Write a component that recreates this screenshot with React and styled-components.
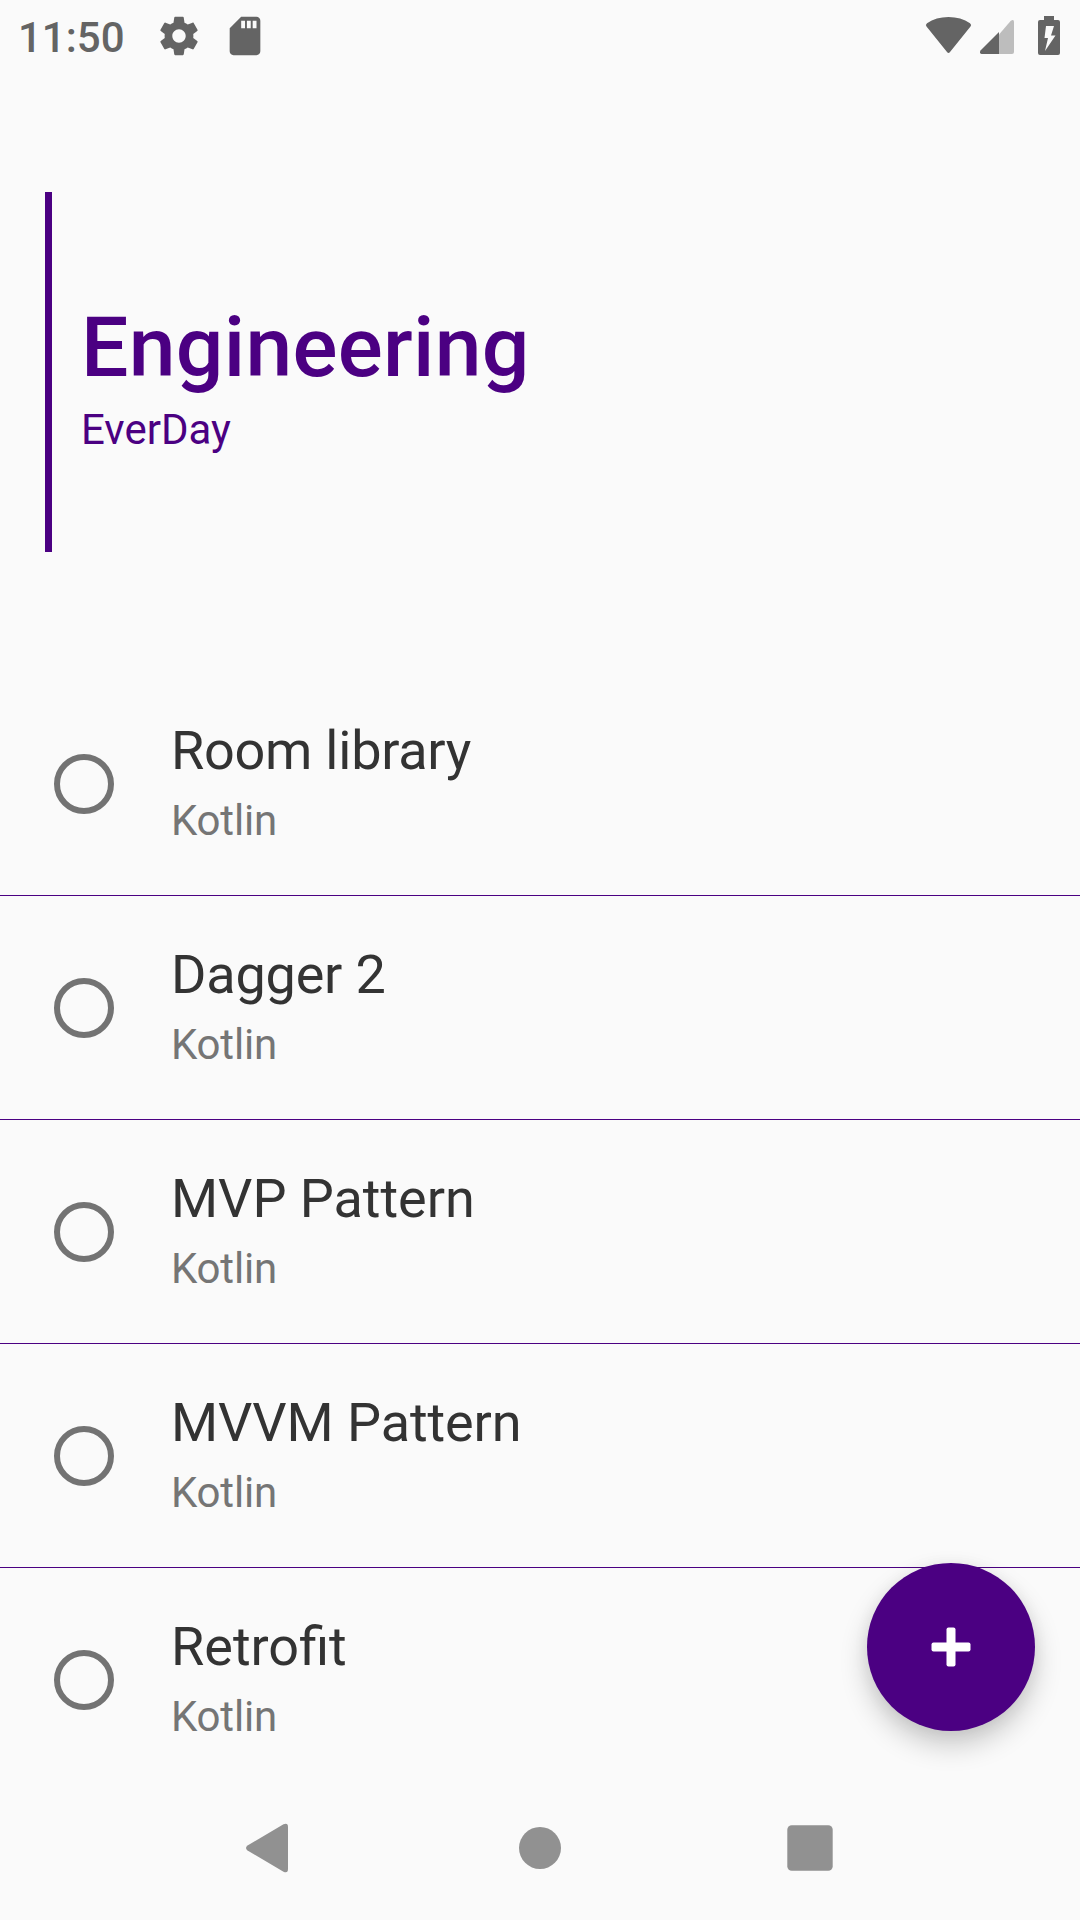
import React from "react";
import styled, { createGlobalStyle } from "styled-components";

const PURPLE = "#4b0082";
const STATUS = "#646464";

const GlobalStyle = createGlobalStyle`
  * { box-sizing: border-box; }
  body {
    margin: 0;
    background: #fafafa;
    font-family: Roboto, "Noto Sans", sans-serif;
    overflow: hidden;
  }
  h1, h2, p, ul { margin: 0; padding: 0; font-weight: 400; }
`;

const Screen = styled.div`
  position: relative;
  display: flex;
  flex-direction: column;
  width: 1080px;
  height: 1920px;
  background: #fafafa;
  overflow: hidden;
`;

const StatusBar = styled.header`
  display: flex;
  align-items: center;
  justify-content: space-between;
  flex: none;
  height: 72px;
  padding: 0 20px 0 18px;
`;

const StatusGroup = styled.div`
  display: flex;
  align-items: center;
  gap: ${(p) => p.$gap}px;
`;

const Clock = styled.span`
  width: 118px;
  padding-top: 3px;
  font-size: 42px;
  line-height: 50px;
  font-weight: 500;
  color: ${STATUS};
`;

const Icon = styled.svg`
  display: block;
  flex: none;
`;

const Header = styled.section`
  display: flex;
  flex: none;
  height: 600px;
  padding: 120px 45px;
`;

const Accent = styled.div`
  width: 7px;
  background: ${PURPLE};
`;

const Heading = styled.div`
  display: flex;
  flex-direction: column;
  gap: 8px;
  padding: 107px 0 0 29px;
  color: ${PURPLE};
`;

const Title = styled.h1`
  font-size: 84px;
  line-height: 98px;
  font-weight: 500;
  letter-spacing: 0.3px;
`;

const Subtitle = styled.p`
  font-size: 42px;
  line-height: 50px;
`;

const List = styled.ul`
  flex: 1;
  min-height: 0;
  overflow: hidden;
  list-style: none;
`;

const Row = styled.li`
  display: flex;
  align-items: center;
  height: 224px;
  padding-left: 54px;
  border-bottom: 1px solid ${PURPLE};
`;

const Radio = styled.span`
  width: 60px;
  height: 60px;
  margin-top: 1px;
  border: 6px solid #737373;
  border-radius: 50%;
`;

const RowText = styled.div`
  display: flex;
  flex-direction: column;
  gap: 13px;
  padding: 0 0 3px 57px;
`;

const RowTitle = styled.h2`
  font-size: 54px;
  line-height: 64px;
  letter-spacing: ${(p) => p.$tracking};
  color: #333333;
`;

const RowMeta = styled.p`
  font-size: 42px;
  line-height: 50px;
  letter-spacing: -0.2px;
  color: #757575;
`;

const Fab = styled.button`
  position: absolute;
  right: 45px;
  bottom: 189px;
  display: grid;
  place-items: center;
  width: 168px;
  height: 168px;
  padding: 0;
  border: 0;
  border-radius: 50%;
  background: ${PURPLE};
  box-shadow: 0 14px 28px rgba(0, 0, 0, 0.2), 0 2px 16px rgba(0, 0, 0, 0.06);
`;

const NavBar = styled.nav`
  display: flex;
  align-items: center;
  justify-content: center;
  gap: 126px;
  flex: none;
  height: 144px;
`;

const NavKey = styled.span`
  display: grid;
  place-items: center;
  width: 144px;
  height: 144px;
`;

const tasks = [
  { name: "Room library", tracking: "-0.25px" },
  { name: "Dagger 2", tracking: "-0.2px" },
  { name: "MVP Pattern", tracking: "-0.05px" },
  { name: "MVVM Pattern", tracking: "-0.1px" },
  { name: "Retrofit", tracking: "normal" },
];

export default function App() {
  return (
    <>
      <GlobalStyle />
      <Screen>
        <StatusBar>
          <StatusGroup $gap={20}>
            <Clock>11:50</Clock>
            <Icon width="46" height="46" viewBox="0 0 24 24" fill={STATUS}>
              <path d="M19.43 12.98c.04-.32.07-.64.07-.98s-.03-.66-.07-.98l2.11-1.65c.19-.15.24-.42.12-.64l-2-3.46c-.12-.22-.39-.3-.61-.22l-2.49 1c-.52-.4-1.08-.73-1.69-.98l-.38-2.65C14.46 2.18 14.25 2 14 2h-4c-.25 0-.46.18-.49.42l-.38 2.65c-.61.25-1.17.59-1.69.98l-2.49-1c-.23-.09-.49 0-.61.22l-2 3.46c-.13.22-.07.49.12.64l2.11 1.65c-.04.32-.07.65-.07.98s.03.66.07.98l-2.11 1.65c-.19.15-.24.42-.12.64l2 3.46c.12.22.39.3.61.22l2.49-1c.52.4 1.08.73 1.69.98l.38 2.65c.03.24.24.42.49.42h4c.25 0 .46-.18.49-.42l.38-2.65c.61-.25 1.17-.59 1.69-.98l2.49 1c.23.09.49 0 .61-.22l2-3.46c.12-.22.07-.49-.12-.64l-2.11-1.65zM12 15.5c-1.93 0-3.5-1.57-3.5-3.5s1.57-3.5 3.5-3.5 3.5 1.57 3.5 3.5-1.57 3.5-3.5 3.5z" />
            </Icon>
            <Icon width="46" height="46" viewBox="0 0 24 24" fill={STATUS}>
              <path d="M18 2h-8L4.02 8 4 20c0 1.1.9 2 2 2h12c1.1 0 2-.9 2-2V4c0-1.1-.9-2-2-2zm-6 6h-2V4h2v4zm3 0h-2V4h2v4zm3 0h-2V4h2v4z" />
            </Icon>
          </StatusGroup>
          <StatusGroup $gap={0}>
            <Icon width="136" height="48" viewBox="924 12 136 48">
              <path d="M926.5 26.5Q925 25 927 23.3Q936 17 948.5 17Q961 17 970 23.3Q972 25 970.5 26.5L950 52Q948.5 54 947 52Z" fill={STATUS} />
              <path d="M999 34.5L1010.8 20.8Q1014 18.5 1014 22V52Q1014 54 1012 54H999Z" fill="#bdbdbd" />
              <path d="M999 32V54H981.5Q979 53.5 980.5 50.5Z" fill={STATUS} />
              <path fillRule="evenodd" d="M1044 16H1054V20H1058Q1060 20 1060 22V53Q1060 55 1058 55H1040Q1038 55 1038 53V22Q1038 20 1040 20H1044ZM1046 26L1044.5 38H1048L1045 51L1055.5 35.5H1051L1054 26Z" fill={STATUS} />
            </Icon>
          </StatusGroup>
        </StatusBar>
        <Header>
          <Accent />
          <Heading>
            <Title>Engineering</Title>
            <Subtitle>EverDay</Subtitle>
          </Heading>
        </Header>
        <List>
          {tasks.map((task) => (
            <Row key={task.name}>
              <Radio />
              <RowText>
                <RowTitle $tracking={task.tracking}>{task.name}</RowTitle>
                <RowMeta>Kotlin</RowMeta>
              </RowText>
            </Row>
          ))}
        </List>
        <NavBar>
          <NavKey>
            <Icon width="60" height="60" viewBox="240 1818 60 60" fill="#919191">
              <path d="M247.5 1845.5L283.5 1824.3Q288 1822.5 288 1827V1869Q288 1873.5 283.5 1871.7L247.5 1850.5Q244.5 1848 247.5 1845.5Z" />
            </Icon>
          </NavKey>
          <NavKey>
            <Icon width="60" height="60" viewBox="0 0 60 60" fill="#919191">
              <circle cx="30" cy="30" r="21" />
            </Icon>
          </NavKey>
          <NavKey>
            <Icon width="60" height="60" viewBox="0 0 60 60" fill="#919191">
              <rect x="7.3" y="7.3" width="45.4" height="45.4" rx="4.5" />
            </Icon>
          </NavKey>
        </NavBar>
        <Fab aria-label="Add">
          <Icon width="40" height="40" viewBox="0 0 40 40" fill="#ffffff">
            <rect x="15.5" y="0.5" width="9" height="39" rx="2" />
            <rect x="0.5" y="15.5" width="39" height="9" rx="2" />
          </Icon>
        </Fab>
      </Screen>
    </>
  );
}
